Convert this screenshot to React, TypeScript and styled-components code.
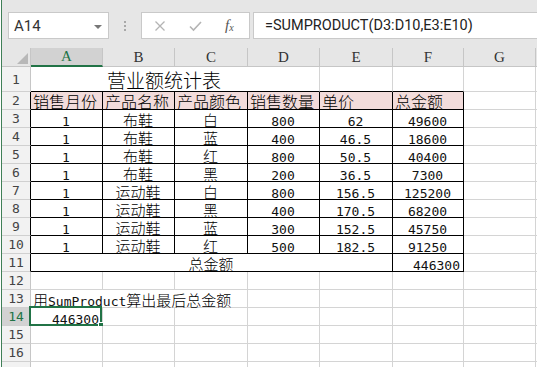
import React from "react";
import styled, { createGlobalStyle } from "styled-components";

const GREEN = "#217346";
const GRID = "#d4d4d4";

const GlobalStyle = createGlobalStyle`
  html, body {
    margin: 0;
    padding: 0;
    background: #fff;
    overflow: hidden;
  }
  body {
    font-family: "Liberation Sans", "Noto Sans CJK SC", sans-serif;
  }
`;

const columns = ["A", "B", "C", "D", "E", "F", "G", ""];

const sales = [
  ["1", "布鞋", "白", "800", "62", "49600"],
  ["1", "布鞋", "蓝", "400", "46.5", "18600"],
  ["1", "布鞋", "红", "800", "50.5", "40400"],
  ["1", "布鞋", "黑", "200", "36.5", "7300"],
  ["1", "运动鞋", "白", "800", "156.5", "125200"],
  ["1", "运动鞋", "黑", "400", "170.5", "68200"],
  ["1", "运动鞋", "蓝", "300", "152.5", "45750"],
  ["1", "运动鞋", "红", "500", "182.5", "91250"],
];

const headings = ["销售月份", "产品名称", "产品颜色", "销售数量", "单价", "总金额"];

const isNum = (s: string) => /^[\d.]+$/.test(s);

const App = () => {
  const emptyCells = (from: number, count: number, ruleB = false) =>
    Array.from({ length: count }).map((_, i) => <Cell key={`e${from + i}`} $ruleB={ruleB} />);

  return (
    <Window>
      <GlobalStyle />
      <Toolbar>
        <NameBox>
          A14
          <DropArrow />
        </NameBox>
        <Grip>
          <Dot />
          <Dot />
          <Dot />
        </Grip>
        <FxButtons>
          <IconSlot>
            <svg width="12" height="12" viewBox="0 0 12 12">
              <path d="M1.5 1.5 L10.5 10.5 M10.5 1.5 L1.5 10.5" stroke="#b4b4b4" strokeWidth="1.3" fill="none" />
            </svg>
          </IconSlot>
          <IconSlot>
            <svg width="13" height="12" viewBox="0 0 13 12">
              <path d="M1 6.5 L4.5 10 L12 2" stroke="#b4b4b4" strokeWidth="1.6" fill="none" />
            </svg>
          </IconSlot>
          <FxLabel>
            f<sub>x</sub>
          </FxLabel>
        </FxButtons>
        <Formula>=SUMPRODUCT(D3:D10,E3:E10)</Formula>
      </Toolbar>

      <Sheet>
        <Corner>
          <CornerMark />
        </Corner>
        {columns.map((c, i) => (
          <ColHead key={c + i} $active={c === "A"}>
            {c}
          </ColHead>
        ))}

        {/* row 1 */}
        <RowHead>1</RowHead>
        <Cell $span={4} $align="center" $ruleB $size={19} $light $pad="0 24px 2px 2px">
          营业额统计表
        </Cell>
        <Cell $ruleB />
        <Cell $ruleB />
        {emptyCells(100, 2)}

        {/* row 2 */}
        <RowHead $edge>2</RowHead>
        {headings.map((h) => (
          <Cell key={h} $bg="#f2dcdb" $ruleR $ruleB $size={16} $light>
            {h}
          </Cell>
        ))}
        {emptyCells(200, 2)}

        {/* rows 3-10 */}
        {sales.map((row, r) => (
          <React.Fragment key={r}>
            <RowHead $edge>{r + 3}</RowHead>
            {row.map((v, c) => (
              <Cell key={c} $align="center" $ruleR $ruleB $light>
                {isNum(v) ? <Num>{v}</Num> : v}
              </Cell>
            ))}
            {emptyCells(300 + r * 10, 2)}
          </React.Fragment>
        ))}

        {/* row 11 */}
        <RowHead $edge>11</RowHead>
        <Cell $span={5} $align="center" $ruleR $ruleB $light>
          总金额
        </Cell>
        <Cell $align="right" $ruleR $ruleB>
          <Num>446300</Num>
        </Cell>
        {emptyCells(400, 2)}

        {/* row 12 */}
        <RowHead>12</RowHead>
        {emptyCells(500, 8)}

        {/* row 13 */}
        <RowHead>13</RowHead>
        <Cell $span={3} $light>
          用<Num>SumProduct</Num>算出最后总金额
        </Cell>
        {emptyCells(600, 5)}

        {/* row 14 */}
        <RowHead $active>14</RowHead>
        <Cell $align="right">
          <Num>446300</Num>
          <Selection>
            <FillHandle />
          </Selection>
        </Cell>
        {emptyCells(700, 7)}

        {[15, 16].map((n) => (
          <React.Fragment key={n}>
            <RowHead>{n}</RowHead>
            {emptyCells(n * 100, 8)}
          </React.Fragment>
        ))}
        <RowHead />
        {emptyCells(1700, 8)}
      </Sheet>
    </Window>
  );
};

export default App;

const Window = styled.div`
  width: 536px;
  height: 367px;
  overflow: hidden;
  margin-left: 1px;
  border-left: 1px solid #3f7f57;
  background: #fff;
`;

const Toolbar = styled.div`
  display: flex;
  align-items: stretch;
  height: 48px;
  box-sizing: border-box;
  padding: 12px 0 9px 6px;
  background: #e6e6e6;
`;

const NameBox = styled.div`
  width: 101px;
  box-sizing: border-box;
  display: flex;
  align-items: center;
  justify-content: space-between;
  padding: 0 6px 0 5px;
  background: #fff;
  border: 1px solid #c9c9c9;
  font-family: Roboto, "Liberation Sans", sans-serif;
  font-size: 15px;
  color: #333;
`;

const DropArrow = styled.span`
  width: 0;
  height: 0;
  border-left: 4px solid transparent;
  border-right: 4px solid transparent;
  border-top: 4px solid #777;
  margin-top: 2px;
`;

const Grip = styled.div`
  width: 32px;
  display: flex;
  flex-direction: column;
  align-items: center;
  justify-content: center;
  gap: 2px;
`;

const Dot = styled.span`
  width: 2px;
  height: 2px;
  background: #a8a8a8;
`;

const FxButtons = styled.div`
  width: 109px;
  box-sizing: border-box;
  display: flex;
  align-items: center;
  gap: 23px;
  padding-left: 11px;
  background: #fff;
  border: 1px solid #c9c9c9;
`;

const IconSlot = styled.span`
  width: 13px;
  display: flex;
  justify-content: center;
`;

const FxLabel = styled.span`
  width: 13px;
  font-family: "Liberation Serif", serif;
  font-style: italic;
  font-size: 15px;
  color: #555;
  sub {
    font-size: 10px;
    vertical-align: -1px;
  }
`;

const Formula = styled.div`
  flex: 1;
  margin: 0 -6px 0 3px;
  display: flex;
  align-items: center;
  padding-left: 11px;
  background: #fff;
  border: 1px solid #c9c9c9;
  font-family: Roboto, "Liberation Sans", sans-serif;
  font-size: 14.5px;
  color: #222;
  white-space: nowrap;
`;

const Sheet = styled.div`
  display: grid;
  grid-template-columns: 29px 72px 72px 73px 72px 73px 71px 72px 30px;
  grid-template-rows: 19px 25px repeat(16, 18px);
`;

const Corner = styled.div`
  position: relative;
  box-sizing: border-box;
  background: #e6e6e6;
  border-right: 1px solid #c6c6c6;
  border-bottom: 1px solid #c6c6c6;
`;

const CornerMark = styled.div`
  position: absolute;
  right: 2px;
  bottom: 2px;
  width: 0;
  height: 0;
  border-left: 11px solid transparent;
  border-bottom: 11px solid #b8b8b8;
`;

const ColHead = styled.div<{ $active?: boolean }>`
  box-sizing: border-box;
  display: flex;
  align-items: center;
  justify-content: center;
  background: ${(p) => (p.$active ? "#d2d2d2" : "#e6e6e6")};
  border-right: 1px solid #c6c6c6;
  border-bottom: ${(p) => (p.$active ? `2px solid ${GREEN}` : "1px solid #c6c6c6")};
  font-family: "Liberation Serif", serif;
  font-size: 15px;
  color: ${(p) => (p.$active ? GREEN : "#333")};
`;

const RowHead = styled.div<{ $active?: boolean; $edge?: boolean }>`
  box-sizing: border-box;
  display: flex;
  align-items: center;
  justify-content: center;
  background: ${(p) => (p.$active ? "#d2d2d2" : "#f2f2f2")};
  border-right: 1px solid ${(p) => (p.$edge ? "#000" : "#c6c6c6")};
  border-bottom: 1px solid #d0d0d0;
  font-family: "DejaVu Sans Mono", monospace;
  font-size: 13px;
  color: ${(p) => (p.$active ? GREEN : "#444")};
`;

const Cell = styled.div<{
  $span?: number;
  $align?: "left" | "center" | "right";
  $bg?: string;
  $ruleR?: boolean;
  $ruleB?: boolean;
  $size?: number;
  $pad?: string;
  $light?: boolean;
}>`
  position: relative;
  box-sizing: border-box;
  grid-column: span ${(p) => p.$span ?? 1};
  display: flex;
  align-items: flex-end;
  justify-content: ${(p) =>
    p.$align === "center" ? "center" : p.$align === "right" ? "flex-end" : "flex-start"};
  padding: ${(p) => p.$pad ?? "0 3px 0 2px"};
  background: ${(p) => p.$bg ?? "#fff"};
  border-right: 1px solid ${(p) => (p.$ruleR ? "#000" : GRID)};
  border-bottom: 1px solid ${(p) => (p.$ruleB ? "#000" : GRID)};
  font-family: "Noto Sans CJK SC", sans-serif;
  font-size: ${(p) => p.$size ?? 15}px;
  font-weight: ${(p) => (p.$light ? 300 : 400)};
  line-height: 1;
  color: #000;
  white-space: nowrap;
`;

const Num = styled.span`
  font-family: "DejaVu Sans Mono", monospace;
  font-size: 13px;
  font-weight: 400;
  line-height: 1;
  margin-bottom: -1px;
  color: #111;
`;

const Selection = styled.div`
  position: absolute;
  left: -2px;
  top: -2px;
  right: 0;
  bottom: -1px;
  border: 2px solid ${GREEN};
  pointer-events: none;
`;

const FillHandle = styled.div`
  position: absolute;
  right: -5px;
  bottom: -5px;
  width: 5px;
  height: 5px;
  background: ${GREEN};
  border: 1px solid #fff;
`;
